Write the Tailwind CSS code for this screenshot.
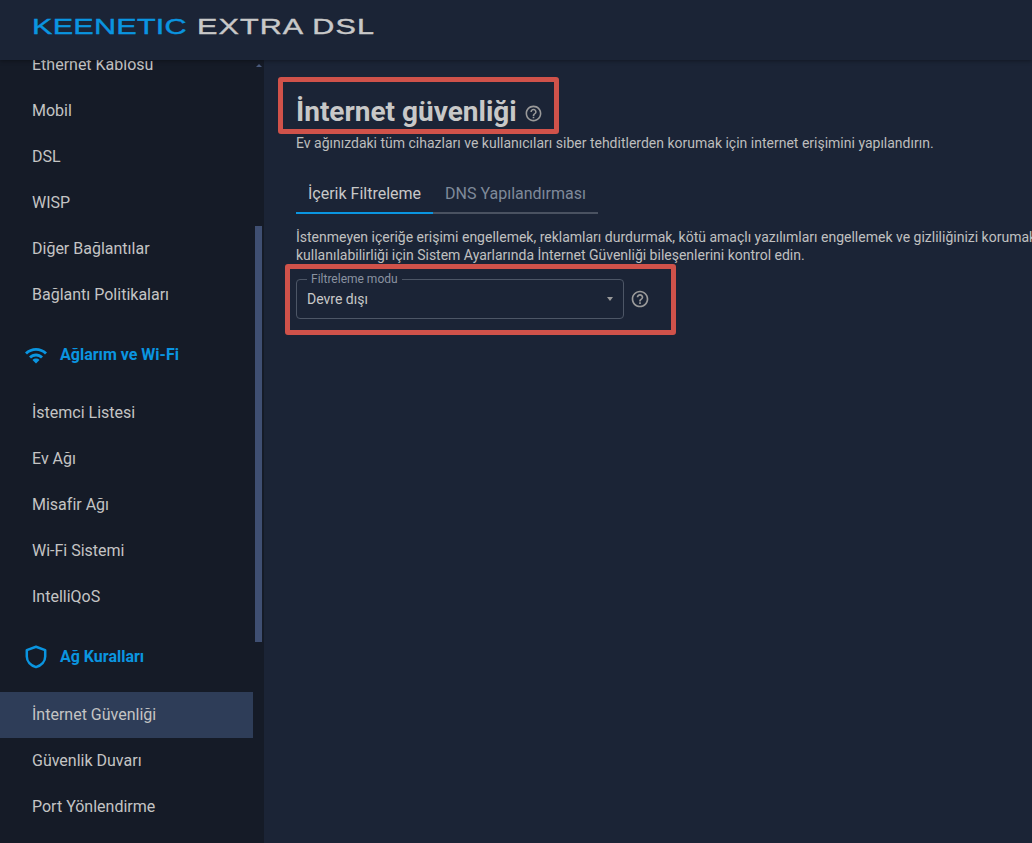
<!DOCTYPE html>
<html lang="tr"><head><meta charset="utf-8">
<script src="https://cdn.jsdelivr.net/npm/@tailwindcss/browser@4"></script></head>
<body class="m-0 bg-[#1b2436]">
<div class="relative w-[1032px] h-[843px] overflow-hidden flex flex-col bg-[#1b2436] font-['Roboto',sans-serif] text-[#c8c8c8]">
  <header class="relative z-10 h-[60px] shrink-0 bg-[#1b2436] shadow-[0_1px_4px_rgba(0,0,0,0.35)] flex items-center pl-[32px]">
    <div class="flex items-center whitespace-nowrap origin-left scale-x-[1.42] font-['Liberation_Sans',sans-serif] text-[21.5px] leading-none -mt-[4px] [-webkit-text-stroke:0.4px] tracking-[0.2px]">
      <span class="text-[#0a95e0]">KEENETIC</span><span class="text-[#c8c8c8] ml-[7px] tracking-[0.8px]">EXTRA DSL</span>
    </div>
  </header>
  <div class="flex flex-1 min-h-0">
    <aside class="relative w-[264px] shrink-0 bg-[#151b27] overflow-hidden text-[16px] text-[#c4c4c4]">
      <nav class="w-[253px] -mt-[18px] flex flex-col">
        <a class="h-[46px] pl-[32px] flex items-center">Ethernet Kablosu</a>
        <a class="h-[46px] pl-[32px] flex items-center">Mobil</a>
        <a class="h-[46px] pl-[32px] flex items-center">DSL</a>
        <a class="h-[46px] pl-[32px] flex items-center">WISP</a>
        <a class="h-[46px] pl-[32px] flex items-center">Diğer Bağlantılar</a>
        <a class="h-[46px] pl-[32px] flex items-center">Bağlantı Politikaları</a>
        <div class="h-[72px] pl-[24px] pt-[2px] flex items-center gap-[12px] text-[#0a95e0] font-bold">
          <svg class="w-[24px] h-[24px] shrink-0" viewBox="0 0 24 24" fill="currentColor"><path d="M1 9.5l2 2c4.97-4.97 13.03-4.97 18 0l2-2C16.93 3.43 7.07 3.43 1 9.5zm4 4l2 2c2.76-2.76 7.24-2.76 10 0l2-2c-3.87-3.87-10.13-3.87-14 0zm3.5 3.5L12 20.5l3.5-3.5c-1.93-1.93-5.07-1.93-7 0z"/></svg>
          <span>Ağlarım ve Wi-Fi</span>
        </div>
        <a class="h-[46px] pl-[32px] flex items-center">İstemci Listesi</a>
        <a class="h-[46px] pl-[32px] flex items-center">Ev Ağı</a>
        <a class="h-[46px] pl-[32px] flex items-center">Misafir Ağı</a>
        <a class="h-[46px] pl-[32px] flex items-center">Wi-Fi Sistemi</a>
        <a class="h-[46px] pl-[32px] flex items-center">IntelliQoS</a>
        <div class="h-[72px] pl-[24px] pt-[1px] flex items-center gap-[12px] text-[#0a95e0] font-bold">
          <svg class="w-[24px] h-[24px] shrink-0" viewBox="0 0 24 24" fill="none" stroke="currentColor" stroke-width="2.5"><path d="M12 1.8L2.8 5.1v6.4c0 5 3.9 9 9.2 10.6 5.3-1.6 9.2-5.6 9.2-10.6V5.1L12 1.8z" stroke-linejoin="round"/></svg>
          <span>Ağ Kuralları</span>
        </div>
        <a class="h-[46px] pl-[32px] flex items-center bg-[#2e3d58]">İnternet Güvenliği</a>
        <a class="h-[46px] pl-[32px] flex items-center">Güvenlik Duvarı</a>
        <a class="h-[46px] pl-[32px] flex items-center">Port Yönlendirme</a>
      </nav>
      <div class="absolute left-[256px] top-[4px] w-0 h-0 border-x-[3px] border-x-transparent border-b-[3px] border-b-[#4a5a7c]"></div>
      <div class="absolute left-[255px] top-[166px] w-[7px] h-[416px] bg-[#3f4f72]"></div>
    </aside>
    <main class="flex-1 min-w-0 pl-[32px] overflow-hidden">
      <h1 class="mt-[30px] flex items-center gap-[7px] text-[28px] leading-[44px] font-bold text-[#c8c8c8] whitespace-nowrap">
        <span>İnternet güvenliği</span>
        <svg class="w-[19px] h-[19px] mt-[2px]" viewBox="0 0 24 24" fill="#9a9a9a"><path d="M11 18h2v-2h-2v2zm1-16C6.48 2 2 6.48 2 12s4.48 10 10 10 10-4.48 10-10S17.52 2 12 2zm0 18c-4.41 0-8-3.59-8-8s3.59-8 8-8 8 3.59 8 8-3.59 8-8 8zm0-14c-2.21 0-4 1.79-4 4h2c0-1.1.9-2 2-2s2 .9 2 2c0 2-3 1.75-3 5h2c0-2.25 3-2.5 3-5 0-2.21-1.79-4-4-4z"/></svg>
      </h1>
      <p class="text-[14px] leading-[18px] whitespace-nowrap text-[#bdbdbd]">Ev ağınızdaki tüm cihazları ve kullanıcıları siber tehditlerden korumak için internet erişimini yapılandırın.</p>
      <div class="mt-[23px] w-[302px] flex border-b-[2px] border-[#4a5261] h-[39px] text-[16px]">
        <div class="w-[137px] h-[39px] border-b-[2px] border-[#0a95e0] flex items-center justify-center text-[#c8c8c8]">İçerik Filtreleme</div>
        <div class="flex-1 flex items-center justify-center text-[#7f8a9a]">DNS Yapılandırması</div>
      </div>
      <p class="mt-[14px] text-[14px] leading-[18px] whitespace-nowrap text-[#c0c0c0]">İstenmeyen içeriğe erişimi engellemek, reklamları durdurmak, kötü amaçlı yazılımları engellemek ve gizliliğinizi korumak için İnternet<br>kullanılabilirliği için Sistem Ayarlarında İnternet Güvenliği bileşenlerini kontrol edin.</p>
      <div class="mt-[15px] flex items-center gap-[6px]">
        <div class="relative w-[328px] h-[40px] rounded-[4px] border border-[#4d5666] flex items-center pl-[10px] text-[14px] text-[#c8c8c8]">
          <span class="absolute left-[10px] -top-[8px] px-[4px] bg-[#1b2436] text-[12px] leading-[14px] text-[#8a92a0]">Filtreleme modu</span>
          <span>Devre dışı</span>
          <span class="absolute right-[10px] top-[17px] w-0 h-0 border-x-[3px] border-x-transparent border-t-[4px] border-t-[#9a9a9a]"></span>
        </div>
        <svg class="w-[20px] h-[20px]" viewBox="0 0 24 24" fill="#9a9a9a"><path d="M11 18h2v-2h-2v2zm1-16C6.48 2 2 6.48 2 12s4.48 10 10 10 10-4.48 10-10S17.52 2 12 2zm0 18c-4.41 0-8-3.59-8-8s3.59-8 8-8 8 3.59 8 8-3.59 8-8 8zm0-14c-2.21 0-4 1.79-4 4h2c0-1.1.9-2 2-2s2 .9 2 2c0 2-3 1.75-3 5h2c0-2.25 3-2.5 3-5 0-2.21-1.79-4-4-4z"/></svg>
      </div>
    </main>
  </div>
  <div class="absolute left-[278px] top-[77px] w-[281px] h-[57px] border-[5px] border-[#d0524a] rounded-[3px] pointer-events-none"></div>
  <div class="absolute left-[285px] top-[264px] w-[391px] h-[71px] border-[5px] border-[#d0524a] rounded-[3px] pointer-events-none"></div>
</div>
</body></html>
